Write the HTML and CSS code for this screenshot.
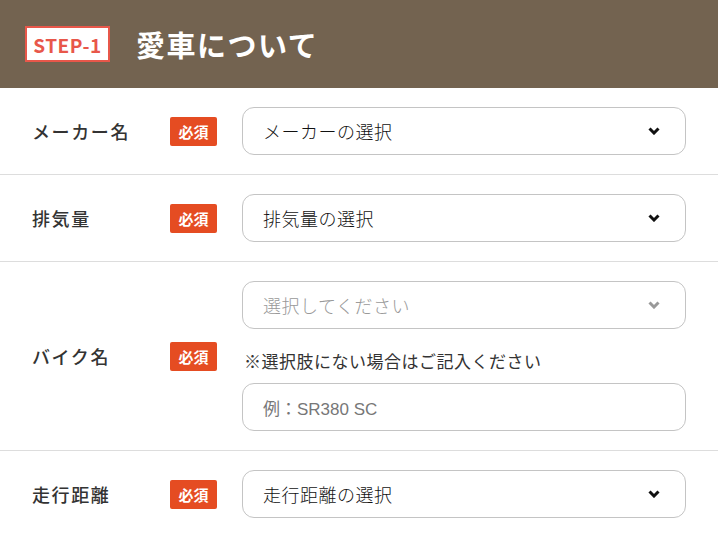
FILE: index.html
```html
<!DOCTYPE html>
<html lang="ja">

<head>
    <meta charset="UTF-8">
    <meta name="viewport" content="width=device-width, initial-scale=1.0">
    <title>愛車について</title>
    <link rel="stylesheet" href="styles.css">
</head>

<body>
    <div class="step-header">
        <span class="step-badge">STEP-1</span>
        <h1>愛車について</h1>
    </div>

    <div class="form-list">
        <div class="form-row">
            <div class="label">メーカー名</div>
            <span class="required">必須</span>
            <div class="field">
                <div class="select">
                    <span>メーカーの選択</span>
                    <svg class="chevron" viewBox="0 0 12 8"><path d="M1.5 1.5 L6 6 L10.5 1.5" /></svg>
                </div>
            </div>
        </div>

        <div class="form-row">
            <div class="label">排気量</div>
            <span class="required">必須</span>
            <div class="field">
                <div class="select">
                    <span>排気量の選択</span>
                    <svg class="chevron" viewBox="0 0 12 8"><path d="M1.5 1.5 L6 6 L10.5 1.5" /></svg>
                </div>
            </div>
        </div>

        <div class="form-row">
            <div class="label">バイク名</div>
            <span class="required">必須</span>
            <div class="field">
                <div class="select disabled">
                    <span>選択してください</span>
                    <svg class="chevron" viewBox="0 0 12 8"><path d="M1.5 1.5 L6 6 L10.5 1.5" /></svg>
                </div>
                <p class="note">※選択肢にない場合はご記入ください</p>
                <div class="text-input">例：SR380 SC</div>
            </div>
        </div>

        <div class="form-row">
            <div class="label">走行距離</div>
            <span class="required">必須</span>
            <div class="field">
                <div class="select">
                    <span>走行距離の選択</span>
                    <svg class="chevron" viewBox="0 0 12 8"><path d="M1.5 1.5 L6 6 L10.5 1.5" /></svg>
                </div>
            </div>
        </div>
    </div>
</body>

</html>
```

FILE: styles.css
```css
* {
    margin: 0;
    padding: 0;
    box-sizing: border-box;
}

body {
    font-family: 'Noto Sans CJK JP', 'Noto Sans', sans-serif;
    background-color: #ffffff;
    color: #333;
}

.step-header {
    background-color: #736350;
    height: 88px;
    padding: 0 25px;
    display: flex;
    align-items: center;
    gap: 26px;
}

.step-badge {
    background-color: #ffffff;
    border: 2px solid #e8574a;
    color: #e8574a;
    font-weight: bold;
    font-size: 19px;
    letter-spacing: 0.5px;
    height: 36px;
    width: 85px;
    display: flex;
    align-items: center;
    justify-content: center;
}

.step-header h1 {
    color: #ffffff;
    font-size: 29px;
    font-weight: bold;
    letter-spacing: 1.5px;
}

.form-row {
    display: flex;
    align-items: center;
    padding: 19px 32px;
    border-bottom: 1px solid #dddddd;
}

.form-row:last-child {
    border-bottom: none;
}

.label {
    width: 138px;
    font-size: 18px;
    font-weight: 500;
    letter-spacing: 1.6px;
    color: #333;
}

.required {
    background-color: #e54c22;
    color: #ffffff;
    font-size: 15px;
    font-weight: bold;
    width: 47px;
    height: 29px;
    border-radius: 2px;
    display: flex;
    align-items: center;
    justify-content: center;
    margin-right: 25px;
}

.field {
    flex: 1;
}

.select, .text-input {
    height: 48px;
    border: 1px solid #c4c4c4;
    border-radius: 12px;
    padding: 0 20px;
    display: flex;
    align-items: center;
    justify-content: space-between;
    font-size: 18px;
    font-weight: 300;
    letter-spacing: 0.5px;
    color: #111;
}

.select.disabled {
    color: #999;
}

.select.disabled .chevron {
    stroke: #999;
}

.chevron {
    width: 12px;
    height: 8px;
    fill: none;
    stroke: #111;
    stroke-width: 3;
    margin-right: 5px;
}

.note {
    font-size: 17px;
    letter-spacing: 0.5px;
    color: #333;
    margin: 20px 0 10px 2px;
    line-height: 24px;
}

.text-input {
    color: #777;
    font-family: 'Liberation Sans', 'Noto Sans CJK JP', sans-serif;
    font-size: 17px;
    font-weight: normal;
    letter-spacing: 0;
}
```
